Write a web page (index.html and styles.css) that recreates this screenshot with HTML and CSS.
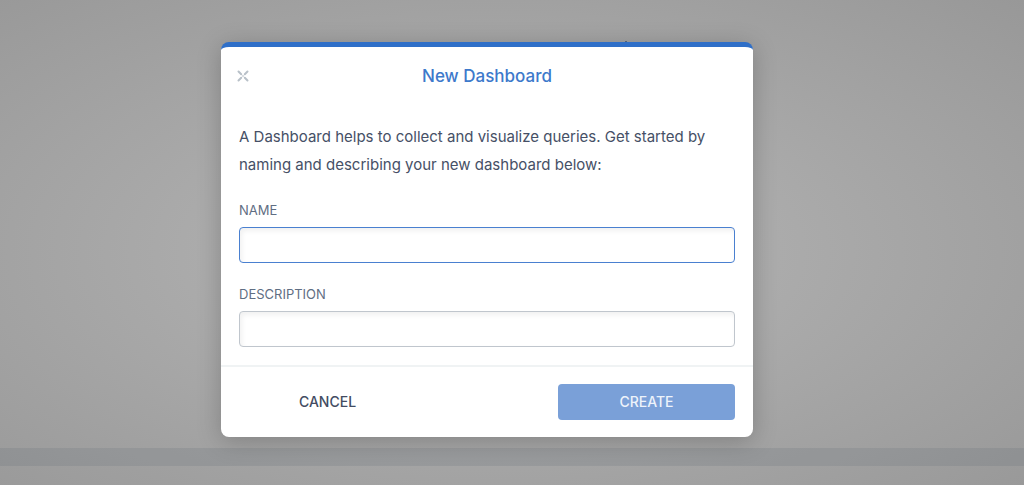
FILE: index.html
```html
<!DOCTYPE html>
<html lang="en">
<head>
<meta charset="utf-8">
<title>New Dashboard</title>
<link rel="stylesheet" href="styles.css">
</head>
<body>
<div class="page">
  <div class="page-main"><span class="page-mark"></span></div>
  <div class="page-band"></div>
  <div class="page-end"></div>
</div>
<div class="overlay">
  <form class="modal" role="dialog" aria-modal="true" aria-labelledby="title">
    <header class="modal-header">
      <button class="close" type="button" aria-label="Close">
        <svg viewBox="0 0 12 12" width="12" height="12" aria-hidden="true">
          <path d="M1.5 1.5 4.2 4.2M10.5 1.5 7.8 4.2M1.5 10.5 4.2 7.8M10.5 10.5 7.8 7.8" />
          <circle cx="6" cy="6" r="0.9" />
        </svg>
      </button>
      <h1 class="title" id="title">New Dashboard</h1>
    </header>
    <div class="modal-body">
      <p class="intro">A Dashboard helps to collect and visualize queries. Get started by naming and describing your new dashboard below:</p>
      <div class="field">
        <label class="label" for="name">NAME</label>
        <input class="input input-active" id="name" type="text">
      </div>
      <div class="field">
        <label class="label" for="description">DESCRIPTION</label>
        <input class="input" id="description" type="text">
      </div>
    </div>
    <footer class="modal-footer">
      <button class="button" type="button">CANCEL</button>
      <button class="button button-primary" type="submit" disabled>CREATE</button>
    </footer>
  </form>
</div>
</body>
</html>
```
FILE: styles.css
```css
* { box-sizing: border-box; }

body {
  margin: 0;
  min-height: 100vh;
  display: grid;
  font-family: Inter, "Liberation Sans", sans-serif;
  color: #465066;
  background: #a5a5a5;
}

.page, .overlay { grid-area: 1 / 1; }

.page {
  display: flex;
  flex-direction: column;
  background: radial-gradient(ellipse at 48% 52%, #b2b2b2 0%, #ababab 38%, #989898 100%);
}
.page-main {
  flex: 1;
  display: flex;
  padding: 41px 0 0 61%;
}
.page-mark { width: 2px; height: 2px; background: #5b6b80; }
.page-band { height: 18px; background: rgba(90, 100, 112, 0.17); }
.page-end { height: 19px; }

.overlay {
  z-index: 1;
  padding: 42px 50px 48px 0;
}

.modal {
  width: 100%;
  max-width: 532px;
  margin: 0 auto;
  background: #fff;
  border-top: 5px solid #2f6fc8;
  border-radius: 8px;
  box-shadow: 0 4px 24px rgba(0, 0, 0, 0.22);
}

.modal-header {
  display: grid;
  grid-template-columns: 12px 1fr 12px;
  align-items: center;
  padding: 16px;
}
.close {
  display: flex;
  padding: 0;
  border: 0;
  background: none;
}
.close svg {
  fill: #c6ccd2;
  stroke: #b8c0c8;
  stroke-width: 2;
  stroke-linecap: round;
}
.close circle { stroke: none; }
.title {
  margin: 0;
  font-size: 17px;
  line-height: 26px;
  font-weight: 500;
  text-align: center;
  color: #3d79cb;
}

.modal-body {
  display: grid;
  gap: 22px;
  padding: 18px;
}
.intro { margin: 0; font-size: 15px; line-height: 28px; }
.field { display: grid; gap: 7px; }
.label { font-size: 13px; line-height: 19px; color: #5f6e83; }
.input {
  width: 100%;
  height: 36px;
  padding: 0 10px;
  font: inherit;
  border: 1px solid #c0c6cd;
  border-radius: 4px;
  outline: none;
  box-shadow: inset 2px 3px 5px rgba(0, 0, 0, 0.06);
}
.input-active { border-color: #4a80d0; }

.modal-footer {
  display: grid;
  grid-template-columns: 5fr 5fr;
  column-gap: 28.6%;
  padding: 17px 18px;
  border-top: 2px solid #f0f3f4;
}
.button {
  height: 36px;
  border: 0;
  border-radius: 4px;
  font: 500 14px/20px Inter, "Liberation Sans", sans-serif;
  color: #434c62;
  background: none;
}
.button-primary { color: #edf3fb; background: #7aa0d8; }
```
